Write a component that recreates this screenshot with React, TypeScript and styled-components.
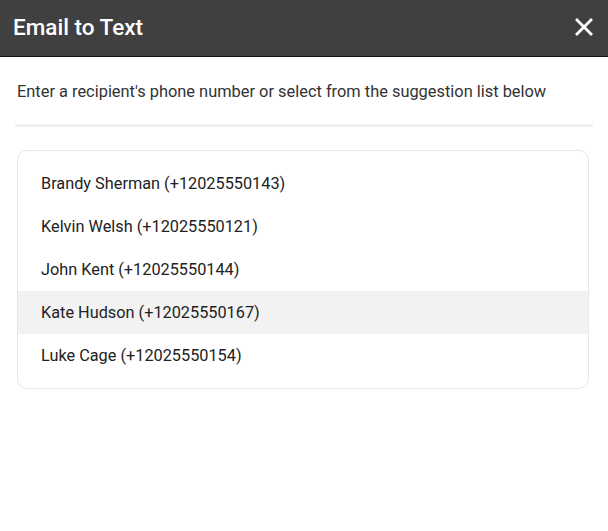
import React from 'react';
import styled, { createGlobalStyle } from 'styled-components';

const GlobalStyle = createGlobalStyle`
  html, body {
    margin: 0;
    padding: 0;
    background: #fff;
    font-family: Roboto, 'Liberation Sans', sans-serif;
  }
`;

const Dialog = styled.div`
  width: 608px;
  height: 531px;
  display: flex;
  flex-direction: column;
  background: #fff;
`;

const Header = styled.header`
  height: 57px;
  display: flex;
  align-items: center;
  justify-content: space-between;
  padding: 0 15px 3px 13px;
  box-sizing: border-box;
  background-color: #404040;
  border-bottom: 1px solid #111;
`;

const Title = styled.h1`
  margin: 0;
  font-size: 22.5px;
  font-weight: 500;
  color: #fff;
  letter-spacing: 0;
`;

const CloseButton = styled.button`
  width: 18px;
  height: 18px;
  padding: 0;
  border: none;
  background: none;
  display: flex;
  align-items: center;
  justify-content: center;
  cursor: pointer;
`;

const Body = styled.div`
  padding: 23px 17px 0 17px;
  display: flex;
  flex-direction: column;
`;

const Hint = styled.p`
  margin: 0;
  font-size: 16.4px;
  line-height: 24px;
  color: #333;
`;

const Divider = styled.div`
  height: 3px;
  margin: 20px -2px 0;
  background: #f0f0f0;
`;

const List = styled.ul`
  list-style: none;
  margin: 23px 2px 0 0;
  padding: 11px 0;
  border: 1px solid #e6e6e6;
  border-radius: 10px;
`;

const Row = styled.li<{ $active?: boolean }>`
  height: 43px;
  display: flex;
  align-items: center;
  padding-left: 23px;
  font-size: 16.3px;
  color: #222;
  background: ${(p) => (p.$active ? '#f2f2f2' : 'transparent')};
`;

const contacts = [
  { name: 'Brandy Sherman', phone: '+12025550143' },
  { name: 'Kelvin Welsh', phone: '+12025550121' },
  { name: 'John Kent', phone: '+12025550144' },
  { name: 'Kate Hudson', phone: '+12025550167' },
  { name: 'Luke Cage', phone: '+12025550154' },
];

const App = () => {
  return (
    <>
      <GlobalStyle />
      <Dialog>
        <Header>
          <Title>Email to Text</Title>
          <CloseButton aria-label='Close'>
            <svg width='18' height='18' viewBox='0 0 18 18'>
              <path d='M2 2 L16 16 M16 2 L2 16' stroke='#fff' strokeWidth='2.8' strokeLinecap='square' />
            </svg>
          </CloseButton>
        </Header>
        <Body>
          <Hint>Enter a recipient's phone number or select from the suggestion list below</Hint>
          <Divider />
          <List>
            {contacts.map((c) => (
              <Row key={c.phone} $active={c.name === 'Kate Hudson'}>
                {c.name} ({c.phone})
              </Row>
            ))}
          </List>
        </Body>
      </Dialog>
    </>
  );
};

export default App;
